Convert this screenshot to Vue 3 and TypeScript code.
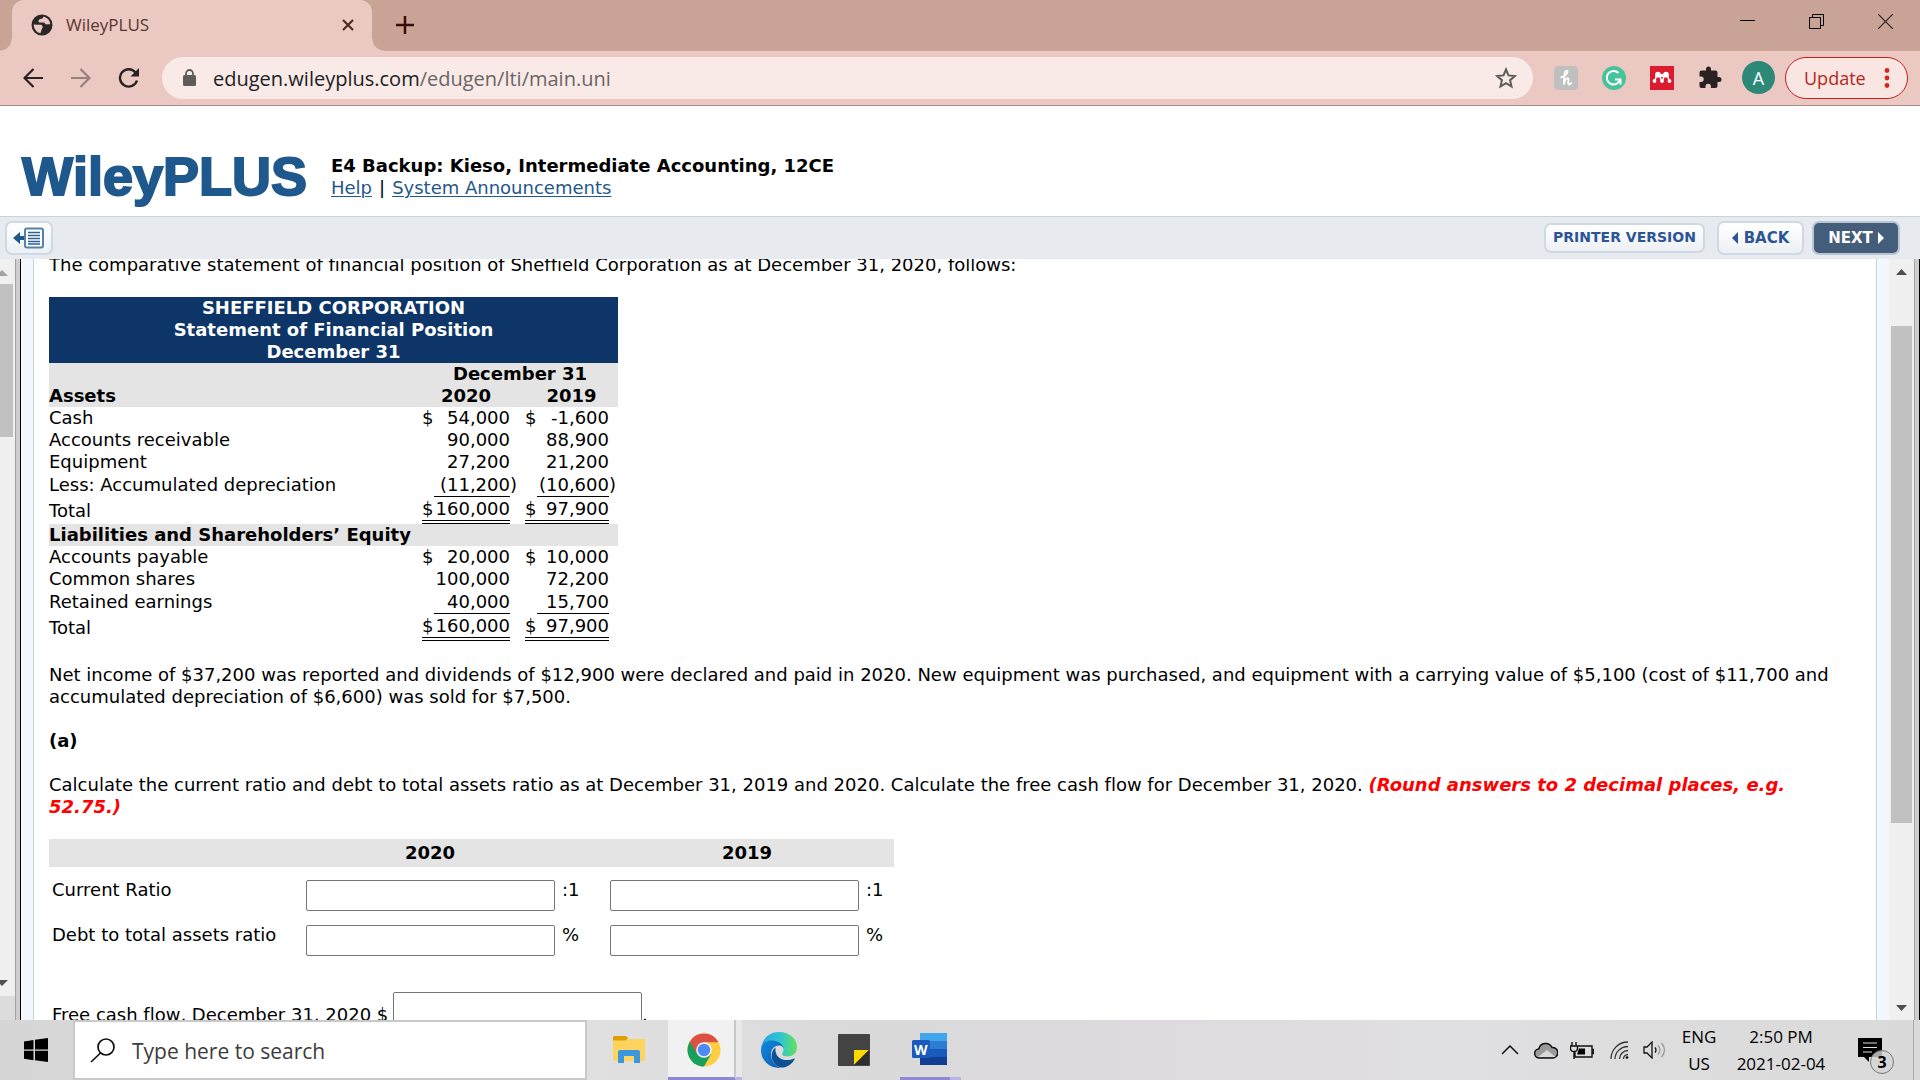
<script setup lang="ts">
import { ref } from 'vue'

interface Amount {
  value: string
  dollar?: boolean
  close?: boolean
}

interface Row {
  label: string
  rule?: 'single' | 'double'
  y2020: Amount
  y2019: Amount
}

const assets: Row[] = [
  { label: 'Cash', y2020: { value: '54,000', dollar: true }, y2019: { value: '-1,600', dollar: true } },
  { label: 'Accounts receivable', y2020: { value: '90,000' }, y2019: { value: '88,900' } },
  { label: 'Equipment', y2020: { value: '27,200' }, y2019: { value: '21,200' } },
  { label: 'Less: Accumulated depreciation', rule: 'single', y2020: { value: '(11,200', close: true }, y2019: { value: '(10,600', close: true } },
  { label: 'Total', rule: 'double', y2020: { value: '160,000', dollar: true }, y2019: { value: '97,900', dollar: true } },
]

const equity: Row[] = [
  { label: 'Accounts payable', y2020: { value: '20,000', dollar: true }, y2019: { value: '10,000', dollar: true } },
  { label: 'Common shares', y2020: { value: '100,000' }, y2019: { value: '72,200' } },
  { label: 'Retained earnings', rule: 'single', y2020: { value: '40,000' }, y2019: { value: '15,700' } },
  { label: 'Total', rule: 'double', y2020: { value: '160,000', dollar: true }, y2019: { value: '97,900', dollar: true } },
]

const ratios = ref([
  { id: 'current', label: 'Current Ratio', unit: ':1', y2020: '', y2019: '' },
  { id: 'debt', label: 'Debt to total assets ratio', unit: '%', y2020: '', y2019: '' },
])
const freeCashFlow = ref('')
const search = ref('')
</script>

<template>
  <div class="desktop">
    <header class="tabs">
      <div class="tab">
        <svg class="globe" viewBox="0 0 22 22"><circle cx="11" cy="11" r="10.5" fill="#2b2626" /><path d="M2.800 10.500c1.800-.3 3 .2 4.200.2h2.500c1.500 0 2.200 1 2.200 2.300s-1 1.700-1.200 3-1 2.300-1 3.300C5.500 18.500 2.500 14.500 2.800 10.500zM12.300 2.800c-.2 1.700-1.300 2.200-2.600 2.200s-2.200 1-2.200 2.200 1 1.300 2 1.300h3.300c1 0 1.200 1.500 2.200 1.800s2.500-.3 4.200 0C19 6.500 16.500 3.500 12.300 2.800z" fill="#ebc9c2" /></svg>
        <span class="tab-title">WileyPLUS</span>
        <button class="plain" aria-label="Close tab"><svg width="12" height="14" viewBox="0 0 12 14"><path d="M1 2l10 10M11 2L1 12" stroke="#4a2620" stroke-width="2" /></svg></button>
      </div>
      <button class="plain new-tab" aria-label="New tab"><svg width="18" height="18" viewBox="0 0 18 18"><path d="M9 0v18M0 9h18" stroke="#3c0b0b" stroke-width="2.500" /></svg></button>
      <div class="window-buttons">
        <button class="plain" aria-label="Minimize"><svg width="15" height="15"><path d="M0 6.500h15" stroke="#000" /></svg></button>
        <button class="plain" aria-label="Restore"><svg width="15" height="15" fill="none" stroke="#000"><path d="M.5 3.500h11v11H.5zM3.500 3.500v-3h11v11h-3" /></svg></button>
        <button class="plain" aria-label="Close"><svg width="15" height="15"><path d="M0 0l15 15M15 0L0 15" stroke="#222" stroke-width="1.200" /></svg></button>
      </div>
    </header>

    <nav class="toolbar">
      <button class="plain nav-button" aria-label="Back"><svg width="20" height="20" fill="none" stroke="#2a2222" stroke-width="2.200"><path d="M20 10H2M10.500 1L1.500 10l9 9" /></svg></button>
      <button class="plain nav-button" aria-label="Forward"><svg width="20" height="20" fill="none" stroke="#96807c" stroke-width="2.200"><path d="M0 10h18M9.500 1l9 9-9 9" /></svg></button>
      <button class="plain nav-button" aria-label="Reload"><svg width="22" height="20" fill="none" stroke="#2a2222" stroke-width="2.400"><path d="M17.500 4.500A8.700 8.700 0 1 0 19 12.500" /><path d="M21 0v8.500h-8.500z" fill="#2a2222" stroke="none" /></svg></button>
      <div class="omnibox">
        <svg width="13" height="17" viewBox="0 0 13 17"><rect y="6" width="13" height="11" rx="1.500" fill="#5f5b5b" /><path d="M3 7V4.500a3.500 3.500 0 0 1 7 0V7" fill="none" stroke="#5f5b5b" stroke-width="1.800" /></svg>
        <div class="url" role="textbox" tabindex="0" aria-label="Address">edugen.wileyplus.com<span>/edugen/lti/main.uni</span></div>
        <button class="plain" aria-label="Bookmark"><svg width="22" height="22" viewBox="0 0 22 22"><path d="M11 2.500l2.500 5.900 6.400.6-4.800 4.200 1.400 6.300L11 16.200l-5.500 3.300 1.400-6.300L2.100 9l6.400-.6z" fill="none" stroke="#5f5b5b" stroke-width="2" /></svg></button>
      </div>
      <div class="extensions">
        <svg width="24" height="24"><rect width="24" height="24" rx="4" fill="#c0bfc0" /><path d="M6.500 11.500C11 10.500 14 7.500 13.500 5.300c-.4-1.300-2.700-.6-3 2.700L9.800 18.500c.7-4 2.500-6.500 4-6.200 2 .4-.8 6 1.200 6.200 1.200 0 2-.8 2.800-2" fill="none" stroke="#fff" stroke-width="1.900" /></svg>
        <svg width="24" height="24"><circle cx="12" cy="12" r="12" fill="#47c39a" /><path d="M16.500 7a6.800 6.800 0 1 0 1.800 6M13 13.500h5.500v5" fill="none" stroke="#fff" stroke-width="2" /></svg>
        <svg width="24" height="24"><path fill="#dc1c2e" d="M0 0h24v24H0z" /><g fill="#fff"><circle cx="8" cy="8.700" r="2.900" /><circle cx="16" cy="8.700" r="2.900" /><circle cx="12" cy="9.500" r="1.700" /><circle cx="4.500" cy="15" r="1.900" /><circle cx="12" cy="15" r="1.900" /><circle cx="19.500" cy="15" r="1.900" /></g><path d="M4.500 15c1.300-1 .8-3.500 2-5M12 15c-1.500-1-1-3.500-2.500-5M12 15c1.500-1 1-3.500 2.500-5M19.500 15c-1.300-1-.8-3.500-2-5" fill="none" stroke="#fff" stroke-width="1.500" /></svg>
        <svg width="24" height="24" viewBox="0 0 24 24"><path d="M21 11h-1.500V6.500c0-1-.8-2-2-2H13V3a2.500 2.500 0 0 0-5 0v1.500H3.500c-1 0-2 .9-2 2v4H3a2.700 2.700 0 0 1 0 5.400H1.500V20c0 1 .9 2 2 2h4v-1.500a2.700 2.700 0 0 1 5.400 0V22h4.600c1 0 2-.9 2-2v-4H21a2.500 2.500 0 0 0 0-5z" fill="#2a2222" /></svg>
      </div>
      <button class="avatar" aria-label="Profile A">A</button>
      <button class="update">Update<svg width="6" height="20" fill="#d02b20"><circle cx="3" cy="2.500" r="2.400" /><circle cx="3" cy="10" r="2.400" /><circle cx="3" cy="17.500" r="2.400" /></svg></button>
    </nav>

    <section class="brand">
      <div class="logo">WileyPLUS</div>
      <div class="course">
        <h1>E4 Backup: Kieso, Intermediate Accounting, 12CE</h1>
        <div class="links"><a href="#help">Help</a><span>|</span><a href="#announcements">System Announcements</a></div>
      </div>
    </section>

    <section class="actions">
      <button class="action collapse" aria-label="Hide contents">
        <svg width="32" height="22" fill="none"><path d="M0 11l7-6v4h5v4H7v4z" fill="#1f588c" /><rect x="12" y="1.500" width="18" height="19" rx="2" fill="#fff" stroke="#5183ad" stroke-width="2" /><path d="M15 5.500h12M15 8.500h12M15 11.500h12M15 14.500h12M15 17h12" stroke="#2d6090" stroke-width="1.500" /></svg>
      </button>
      <button class="action printer">PRINTER VERSION</button>
      <button class="action back"><svg width="6" height="12"><path d="M6 0v12L0 6z" fill="#2c5596" /></svg>BACK</button>
      <button class="action next">NEXT<svg width="6" height="12"><path d="M0 0v12l6-6z" fill="#fff" /></svg></button>
    </section>

    <div class="frames">
      <aside class="left-frame">
        <div class="scrollbar">
          <svg class="arrow" width="8" height="6"><path d="M0 6h8L2 0 0 2z" fill="#a3a3a3" /></svg>
          <div class="thumb"></div>
          <svg class="arrow down" width="8" height="6"><path d="M0 0h8L2 6 0 4z" fill="#505050" /></svg>
        </div>
        <div class="corner"></div>
      </aside>
      <div class="splitter"></div>

      <main class="question">
        <div class="sheet">
          <p>The comparative statement of financial position of Sheffield Corporation as at December 31, 2020, follows:</p>

          <table class="statement">
            <colgroup><col class="c-label"><col class="c-first"><col class="c-second"></colgroup>
            <thead>
              <tr class="title"><th colspan="3">SHEFFIELD CORPORATION<br>Statement of Financial Position<br>December 31</th></tr>
              <tr class="shade"><th></th><th colspan="2">December 31</th></tr>
              <tr class="shade"><th class="left">Assets</th><th class="first">2020</th><th>2019</th></tr>
            </thead>
            <tbody>
              <tr v-for="row in assets" :key="row.label" :class="row.rule">
                <td>{{ row.label }}</td>
                <td class="first"><span class="amount"><span v-if="row.y2020.dollar">$</span><span class="figure">{{ row.y2020.value }}<span v-if="row.y2020.close" class="paren">)</span></span></span></td>
                <td class="second"><span class="amount"><span v-if="row.y2019.dollar">$</span><span class="figure">{{ row.y2019.value }}<span v-if="row.y2019.close" class="paren">)</span></span></span></td>
              </tr>
            </tbody>
            <tbody>
              <tr class="shade"><th class="left" colspan="3">Liabilities and Shareholders’ Equity</th></tr>
              <tr v-for="row in equity" :key="row.label" :class="row.rule">
                <td>{{ row.label }}</td>
                <td class="first"><span class="amount"><span v-if="row.y2020.dollar">$</span><span class="figure">{{ row.y2020.value }}</span></span></td>
                <td class="second"><span class="amount"><span v-if="row.y2019.dollar">$</span><span class="figure">{{ row.y2019.value }}</span></span></td>
              </tr>
            </tbody>
          </table>

          <p>Net income of $37,200 was reported and dividends of $12,900 were declared and paid in 2020. New equipment was purchased, and equipment with a carrying value of $5,100 (cost of $11,700 and accumulated depreciation of $6,600) was sold for $7,500.</p>
          <p><b>(a)</b></p>
          <p class="task">Calculate the current ratio and debt to total assets ratio as at December 31, 2019 and 2020. Calculate the free cash flow for December 31, 2020. <strong>(Round answers to 2 decimal places, e.g. 52.75.)</strong></p>

          <table class="answers">
            <colgroup><col class="a-label"><col class="a-year"><col class="a-last"></colgroup>
            <thead>
              <tr><th></th><th id="h2020">2020</th><th id="h2019">2019</th></tr>
            </thead>
            <tbody>
              <tr v-for="r in ratios" :key="r.id">
                <td :id="r.id">{{ r.label }}</td>
                <td><div class="entry"><input v-model="r.y2020" type="text" :aria-labelledby="r.id + ' h2020'">{{ r.unit }}</div></td>
                <td><div class="entry"><input v-model="r.y2019" type="text" :aria-labelledby="r.id + ' h2019'">{{ r.unit }}</div></td>
              </tr>
            </tbody>
          </table>
          <div class="cash-flow">
            <label for="fcf">Free cash flow, December 31, 2020 $</label><input id="fcf" v-model="freeCashFlow" type="text"><span>.</span>
          </div>
        </div>
      </main>

      <div class="scrollbar right">
        <svg class="arrow" width="11" height="6"><path d="M0 6h11L5.500 0z" fill="#505050" /></svg>
        <div class="thumb"></div>
        <svg class="arrow down" width="11" height="6"><path d="M0 0h11L5.500 6z" fill="#505050" /></svg>
      </div>
      <div class="splitter"></div>
    </div>

    <footer class="taskbar">
      <button class="plain start" aria-label="Start"><svg width="24" height="24"><path d="M0 3.500L9.500 2v9.500H0zM11 1.800L24 0v11.500H11zM0 12.800h9.500v9.400L0 20.800zM11 12.800h13V24l-13-1.700z" /></svg></button>
      <label class="search">
        <svg width="25" height="25" fill="none" stroke="#111" stroke-width="1.700"><circle cx="16" cy="9" r="8" /><path d="M10.500 15L1 24" /></svg>
        <input v-model="search" type="text" placeholder="Type here to search" aria-label="Type here to search">
      </label>
      <button class="plain app explorer" aria-label="File Explorer"><svg width="32" height="28"><path d="M0 3h32v20a2 2 0 0 1-2 2H2a2 2 0 0 1-2-2z" fill="#ffd45e" /><path d="M0 1.500A1.500 1.500 0 0 1 1.500 0H13l2 2-2 2.500H0z" fill="#e19e00" /><path d="M5 27V16a2 2 0 0 1 2-2h18a2 2 0 0 1 2 2v11h-6v-7H11v7z" fill="#3a96dd" /></svg></button>
      <button class="plain app chrome" aria-label="Google Chrome"><svg width="34" height="34" viewBox="0 0 34 34"><circle cx="17" cy="17" r="16.500" fill="#ffcd40" /><path d="M17 17L2.700 8.800A16.500 16.500 0 0 0 17 33.500l7.100-12.300z" fill="#16a05d" /><path d="M17 9.200h14.500A16.500 16.500 0 0 0 2.700 8.800L10 21z" fill="#dd5144" /><circle cx="17" cy="17" r="7.800" fill="#f4f4f4" /><circle cx="17" cy="17" r="6.200" fill="#4c8bf5" /></svg></button>
      <div class="stack"></div>
      <button class="plain app edge" aria-label="Microsoft Edge">
        <svg width="36" height="36" viewBox="0 0 36 36">
          <defs>
            <linearGradient id="edge-top"><stop offset="0" stop-color="#25a5e5" /><stop offset=".55" stop-color="#2fc6cf" /><stop offset="1" stop-color="#66e15a" /></linearGradient>
            <linearGradient id="edge-low" x1="0" y1="0" x2="1" y2="1"><stop offset="0" stop-color="#1289dc" /><stop offset="1" stop-color="#0c58b0" /></linearGradient>
          </defs>
          <path d="M0 17C1 7 8 0 18 0c11 0 18 7 18 15 0 6-4 9.500-9 9.500-4 0-6-1.200-6-2.500s1.500-1.500 1.500-4c0-5-6-9-12.500-9C5 9 1.500 12 0 17z" fill="url(#edge-top)" />
          <path d="M0 18C0 12 5 8.500 11 8.500c6 0 11.500 4 11.500 8.500 0-2-2-3.500-4.500-3.500-5 0-8 4-8 9 0 7 5 12 10 13.300C9 37 0 29 0 18z" fill="url(#edge-low)" />
          <path d="M14.500 15.500C10.500 18 9 26 13 31c2 3 5.500 5 9 4.500 5-.5 9.500-4.500 11.500-8 .5-.8-.2-1.300-1-.8C26 30 13 28 14.500 15.500z" fill="#0c4f94" />
        </svg>
      </button>
      <button class="plain app notes" aria-label="Sticky Notes"><svg width="32" height="32"><rect width="32" height="32" rx="1" fill="#434343" /><path d="M16 16h15L16 31z" fill="#ffd800" /><path d="M31 16v15H16z" fill="#2e2e2e" /></svg></button>
      <button class="plain app word" aria-label="Word">
        <svg width="36" height="33" viewBox="0 0 36 33"><path d="M8 0h27v9H8z" fill="#41a5ee" /><path d="M8 8h27v9H8z" fill="#2b7cd3" /><path d="M8 16h27v8H8z" fill="#185abd" /><path d="M8 24h27v8H8z" fill="#103f91" /><rect y="7" width="18" height="18" rx="1.500" fill="#185abd" /></svg>
        <span>W</span>
      </button>
      <div class="stack"></div>

      <div class="tray">
        <svg class="t-chevron" width="18" height="10"><path d="M1 9l8-8 8 8" fill="none" stroke="#111" stroke-width="1.500" /></svg>
        <svg class="t-cloud" width="24" height="17"><path d="M5.500 16a4.500 4.500 0 0 1-.7-9A7 7 0 0 1 18 5.500a5 5 0 0 1 1 10.500z" fill="#9a9a9a" stroke="#111" stroke-width="1.500" /><path d="M4 15l9-7 8.500 7z" fill="#d8d8d8" /></svg>
        <svg class="t-battery" width="24" height="17"><path d="M7.500 4H22v11H5V9.500M22 7.500h1.500v4H22M2 0v4M6 0v4M.5 4h7v2.500a3.500 3 0 0 1-7 0zM4 9.500V17" fill="none" stroke="#111" stroke-width="1.400" /><path d="M9 6.500h6v6H7z" /></svg>
        <svg class="t-wifi" width="19" height="18" fill="none" stroke="#333" stroke-width="1.300"><path d="M1 18C1 9 8 1 18 1M5 18c0-7 6-12.500 13-12.500M9.500 18c0-4.500 4-8.500 8.500-8.500M13.500 18c0-2.500 2-4.500 4.500-4.500" /><circle cx="17" cy="16.500" r="1.300" fill="#000" stroke="none" /></svg>
        <svg class="t-volume" width="23" height="18" fill="none" stroke="#111" stroke-width="1.300"><path d="M1 6h3l5-5v16l-5-5H1zM12 6.500q2 2.500 0 5" /><path d="M15 4.500q4 4.500 0 9M18.500 2q6 7 0 14" stroke="#999" /></svg>
        <div class="lang">ENG<br>US</div>
        <div class="clock">2:50 PM<br>2021-02-04</div>
        <button class="plain notice" aria-label="3 notifications"><svg width="24" height="24"><path d="M0 0h24v19H11v5l-5-5H0z" /><path d="M5 5h14M5 9.500h14M5 14h9" stroke="#ddd" stroke-width="1.200" /></svg><span>3</span></button>
        <div class="peek"></div>
      </div>
    </footer>
  </div>
</template>

<style>
html, body, #app { height: 100%; }
body { margin: 0; overflow: hidden; }
</style>

<style scoped>
* { box-sizing: border-box; }
svg { display: block; flex: none; }
.desktop { height: 100%; display: flex; flex-direction: column; background: #fff; color: #000; font: 18px/22px "DejaVu Sans", Verdana, sans-serif; font-variant-ligatures: none; }
.desktop > * { flex: none; }
.plain { display: flex; align-items: center; justify-content: center; padding: 0; border: 0; background: none; color: inherit; }

.tabs { height: 51px; display: flex; align-items: center; background: #c9a396; padding-left: 12px; font-family: "Open Sans", sans-serif; }
.tab { position: relative; width: 360px; height: 51px; padding: 0 18px 2px 19px; display: flex; align-items: center; background: #ebc9c2; border-radius: 12px 12px 0 0; }
.tab::before, .tab::after { content: ""; position: absolute; bottom: 0; width: 12px; height: 12px; }
.tab::before { left: -12px; background: radial-gradient(circle at 0 0, #c9a396 11px, #ebc9c2 12px); }
.tab::after { right: -12px; background: radial-gradient(circle at 100% 0, #c9a396 11px, #ebc9c2 12px); }
.globe { width: 22px; height: 22px; }
.tab-title { flex: 1; padding-left: 13px; font-size: 17px; color: #5a362e; }
.new-tab { margin-left: 24px; padding-bottom: 2px; }
.window-buttons { margin-left: auto; display: flex; gap: 54px; padding: 0 27px 8px 0; }

.toolbar { height: 55px; display: flex; align-items: center; padding: 0 12px 1px 18px; background: #ebc9c2; border-bottom: 1px solid #a88a86; font-family: "Open Sans", sans-serif; }
.nav-button { width: 30px; margin-right: 18px; }
.omnibox { flex: 1; height: 42px; display: flex; align-items: center; padding: 0 16px 0 21px; background: #f9eae8; border-radius: 21px; }
.url { flex: 1; padding: 2px 0 0 17px; font-size: 20px; color: #202124; }
.url span { color: #6b6565; }
.extensions { display: flex; gap: 24px; margin: 0 20px 0 21px; }
.avatar { width: 33px; height: 33px; padding: 0; border: 0; border-radius: 50%; background: #2d8878; color: #fff; font: 18px "Open Sans", sans-serif; }
.update { width: 123px; height: 42px; display: flex; align-items: center; justify-content: space-between; margin-left: 10px; padding: 0 17px 0 18px; border: 1px solid #c5221f; border-radius: 21px; background: #f9e6e3; color: #b5271c; font: 18px "Open Sans", sans-serif; }

.brand { height: 110px; display: flex; padding: 36px 0 0 22px; }
.logo { width: 309px; font: bold 54px/60px "Liberation Sans", Arial, sans-serif; color: #1f588c; padding-top: 4px; font-kerning: none; -webkit-text-stroke: 2px #1f588c; }
.course { padding-top: 12px; }
.course h1 { margin: 0; font-size: 18px; line-height: 23px; }
.links { display: flex; gap: 7px; }
.course a { color: #1f588c; text-underline-offset: 2px; text-decoration-thickness: 1px; }

.actions { height: 43px; display: flex; align-items: center; padding: 0 20px 0 5px; background: #e7eaef; border-top: 1px solid #c9d3de; }
.action { height: 34px; display: flex; align-items: center; justify-content: center; gap: 6px; padding: 0; border: 2px solid #cfd8e4; border-radius: 7px; background: linear-gradient(#fff, #edf0f4); color: #2c5596; font: bold 15px "DejaVu Sans", Verdana, sans-serif; }
.collapse { width: 48px; margin-right: auto; }
.printer { width: 161px; height: 30px; padding-bottom: 2px; font-size: 14px; }
.back { width: 87px; margin: 0 8px 0 12px; }
.next { width: 88px; background: #435d7a; border-color: #b9c5d3; color: #fff; gap: 5px; }

.desktop > .frames { flex: 1; min-height: 0; display: flex; overflow: hidden; }
.left-frame { width: 15px; display: flex; flex-direction: column; background: #f0f0f0; }
.scrollbar { flex: 1; display: flex; flex-direction: column; background: #f0f0f0; padding: 11px 2px 10px 0; }
.thumb { margin-top: 8px; height: 153px; background: #c1c1c1; }
.down { margin-top: auto; }
.corner { height: 24px; background: #dcdcdc; }
.splitter { flex: none; width: 6px; background: #cdcdcd; border-left: 1px solid #a3a3a3; border-right: 1px solid #000; }
.question { flex: 1; min-width: 0; overflow: hidden; padding: 0 12px; background: #f4f8fc; }
.sheet { min-height: 100%; padding: 0 24px 0 15px; background: #fff; border: solid #c6d1e0; border-width: 0 1px; }
.right { flex: none; width: 25px; padding: 10px 2px 9px; }
.right .arrow { align-self: center; }
.right .thumb { margin-top: 51px; height: 497px; }

p { margin: 0 0 22px; }
p:first-child { margin: -5px 0 21px; }
.task { margin-bottom: 21px; }
strong { color: #f00; font-style: italic; }
table { border-collapse: collapse; table-layout: fixed; }
th, td { padding: 0; text-align: left; }
.statement { width: 569px; margin-bottom: 23px; }
.c-label { width: 373px; }
.c-first { width: 103px; }
.c-second { width: 93px; }
.statement th { text-align: center; }
.statement th.left { text-align: left; }
.title { background: #0d3567; color: #fff; }
.shade { background: #e4e4e4; height: 22px; }
.first { padding-right: 15px; }
.second { padding-right: 9px; }
.amount { display: flex; justify-content: space-between; }
.figure { margin-left: auto; white-space: nowrap; }
.paren { margin-right: -7px; }
.single .first, .single .second, .double .first, .double .second { padding-top: 1px; }
.single .amount { border-bottom: 1px solid #000; margin-left: 12px; }
.double .amount { border-bottom: 4px double #000; }

.answers { width: 845px; }
.a-label { width: 257px; }
.a-year { width: 304px; }
.a-last { width: 284px; }
.answers th { height: 28px; background: #e4e4e4; text-align: center; padding-right: 56px; }
.answers th:last-child { padding-right: 10px; }
.answers td { height: 45px; padding-top: 12px; vertical-align: top; }
.answers td:first-child { padding-left: 3px; }
.entry { display: flex; gap: 7px; }
.sheet input { width: 249px; height: 31px; border: 1px solid #767676; border-radius: 2px; background: #fff; padding: 0 4px; font: inherit; }
.entry input { margin-top: 1px; }
.cash-flow { display: flex; padding: 35px 0 0 3px; }
.cash-flow label, .cash-flow span { padding-top: 12px; }
.cash-flow label { width: 341px; }

.taskbar { height: 60px; display: flex; background: linear-gradient(90deg, #d6d6d6, #e0e0e0 30%, #dadada 45%, #dedadf 60%, #e0dfe1 75%, #dadada); font-family: "Open Sans", sans-serif; }
.start { width: 73px; padding-right: 1px; }
.search { width: 514px; display: flex; align-items: center; padding-left: 15px; background: #fff; border: 2px solid #c9c9c9; }
.search input { flex: 1; min-width: 0; margin-left: 17px; padding: 2px 0 0; border: 0; outline: 0; background: none; font: 21px "Open Sans", sans-serif; }
.search input::placeholder { color: #3c3c3c; opacity: 1; }
.app { width: 75px; border-bottom: 3px solid transparent; padding-top: 2px; }
.explorer { width: 81px; padding-left: 2px; }
.chrome { width: 68px; background: #f1f1f1; border-right: 2px solid #c8c8c8; border-bottom-color: #8e88d6; padding-left: 6px; }
.stack { width: 6px; background: #e8e8e8; border-bottom: 3px solid #b9b3ea; }
.edge { width: 76px; padding-right: 2px; }
.notes { width: 74px; padding-right: 2px; }
.word { position: relative; width: 50px; margin-left: 8px; border-bottom-color: #8e88d6; padding-left: 10px; }
.word span { position: absolute; left: 14px; top: 20px; font: bold 14px/20px "Open Sans", sans-serif; color: #fff; }
.word + .stack { width: 11px; background: none; }
.tray { margin-left: auto; display: flex; align-items: center; padding-right: 6px; font-size: 17px; line-height: 27px; text-align: center; }
.t-chevron { margin-right: 15px; }
.t-cloud { margin-right: 12px; }
.t-battery { margin-right: 16px; }
.t-wifi { margin-right: 14px; }
.lang { width: 50px; margin-left: 8px; }
.clock { width: 114px; margin-right: 20px; }
.notice { position: relative; margin-right: 31px; }
.notice span { position: absolute; left: 12px; top: 12px; width: 24px; height: 24px; border: 1px solid #777; border-radius: 50%; background: #d4d4d4cc; font: bold 16px/22px "Open Sans", sans-serif; }
.peek { width: 1px; height: 60px; background: #aaa; }
</style>
